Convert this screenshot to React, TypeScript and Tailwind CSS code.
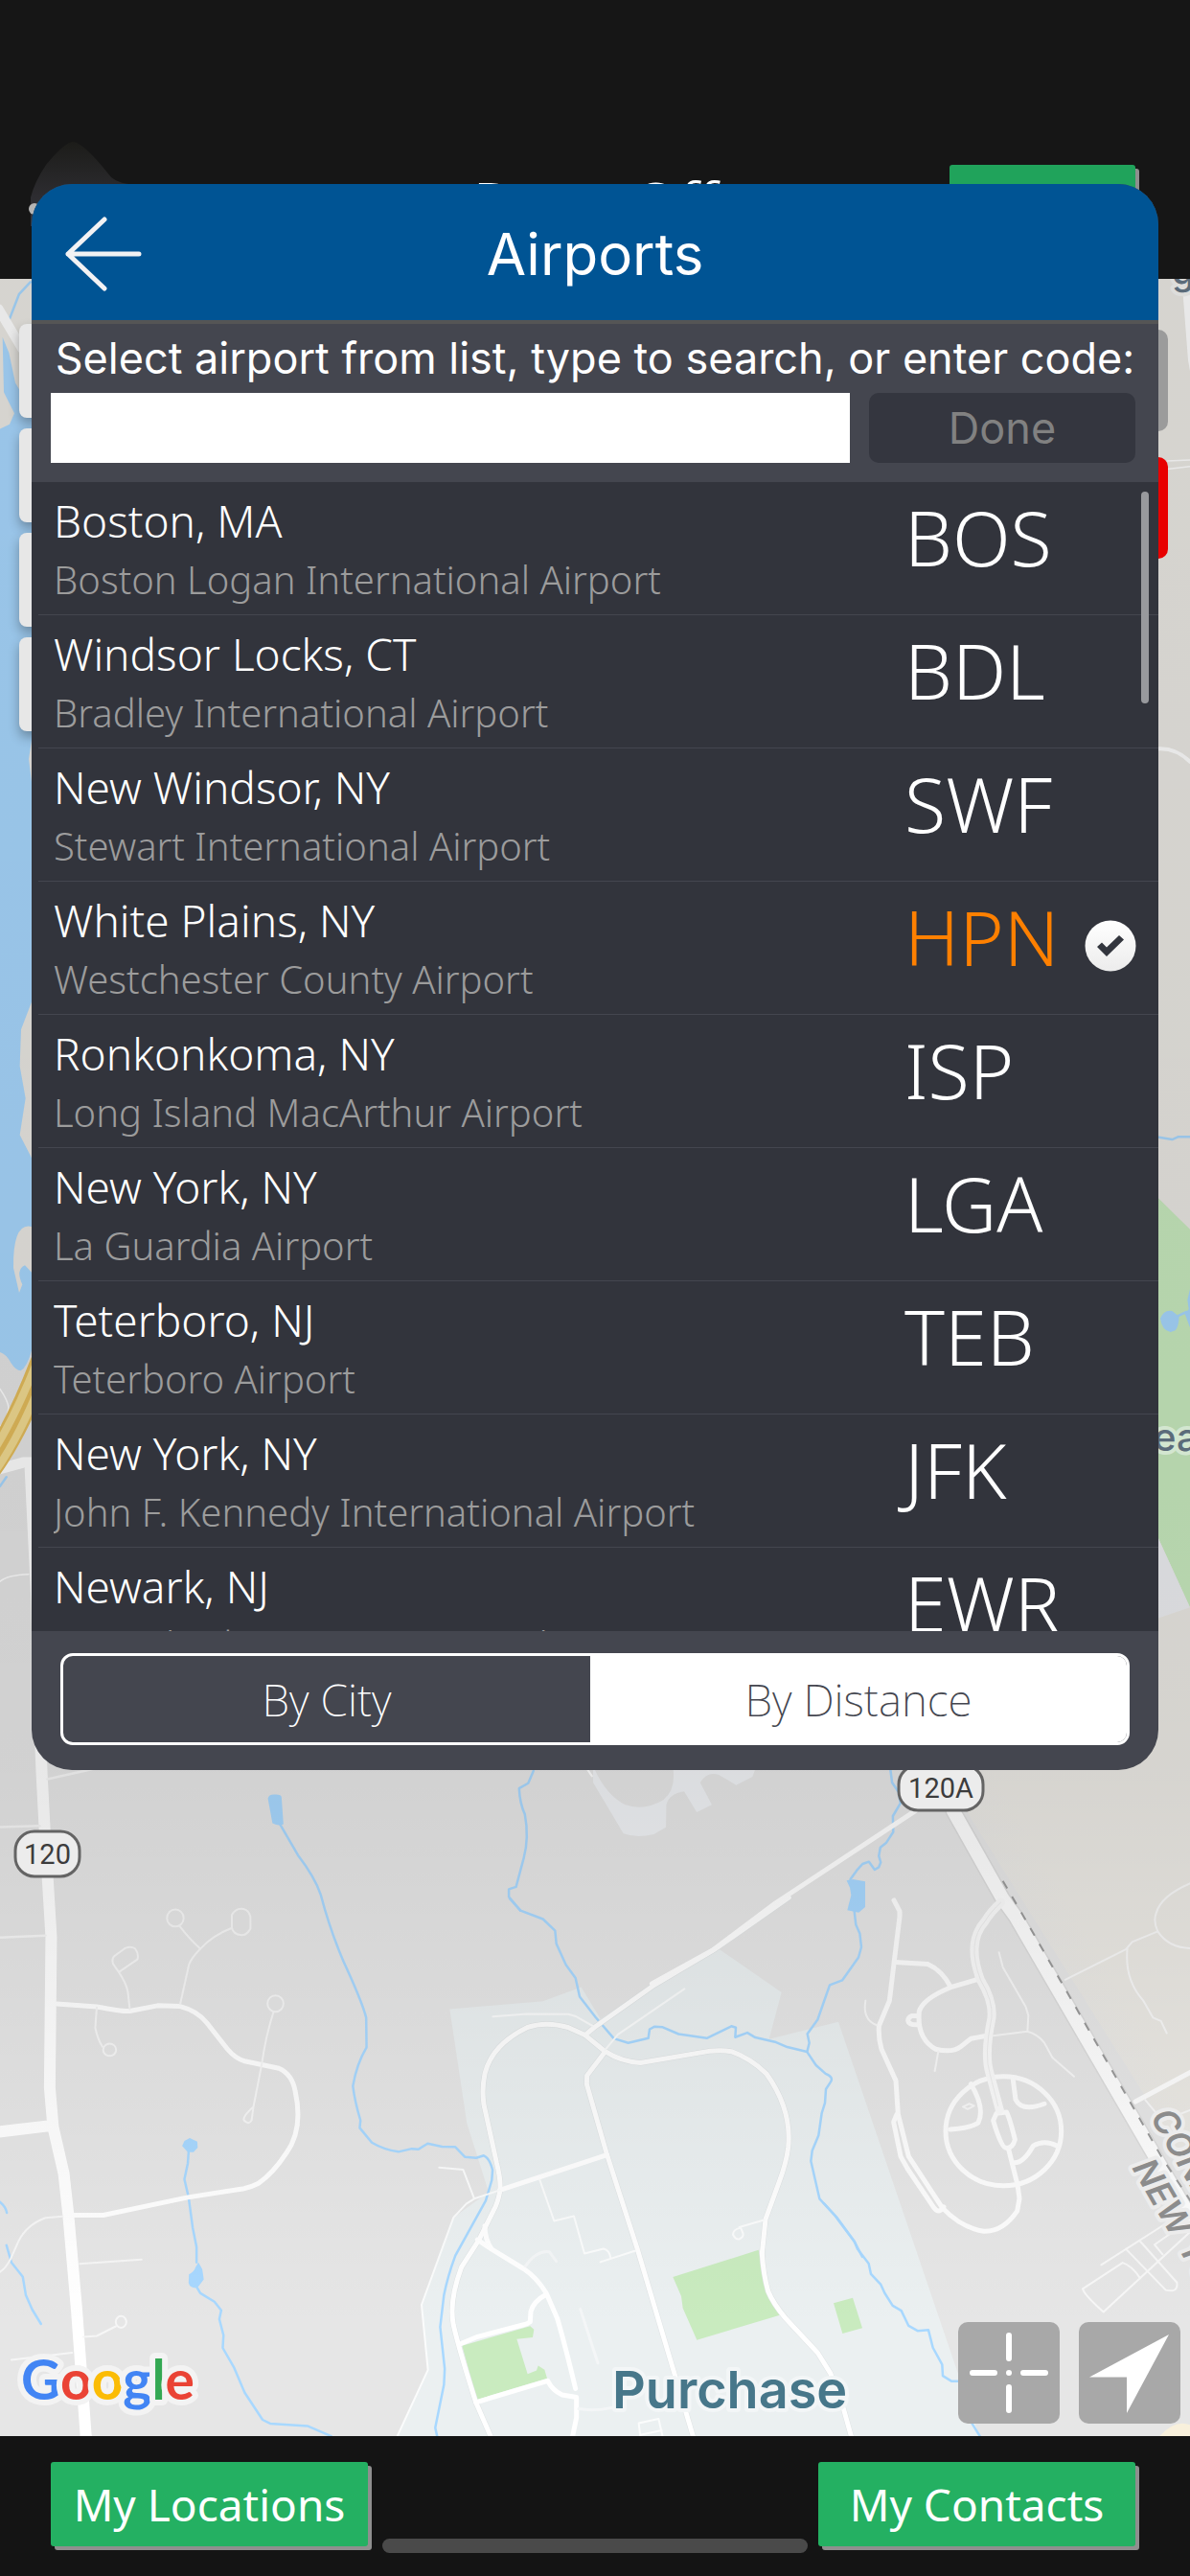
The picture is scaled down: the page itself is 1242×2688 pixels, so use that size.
import React from "react";

type Airport = { city: string; name: string; code: string; selected?: boolean };

const airports: Airport[] = [
  { city: "Boston, MA", name: "Boston Logan International Airport", code: "BOS" },
  { city: "Windsor Locks, CT", name: "Bradley International Airport", code: "BDL" },
  { city: "New Windsor, NY", name: "Stewart International Airport", code: "SWF" },
  { city: "White Plains, NY", name: "Westchester County Airport", code: "HPN", selected: true },
  { city: "Ronkonkoma, NY", name: "Long Island MacArthur Airport", code: "ISP" },
  { city: "New York, NY", name: "La Guardia Airport", code: "LGA" },
  { city: "Teterboro, NJ", name: "Teterboro Airport", code: "TEB" },
  { city: "New York, NY", name: "John F. Kennedy International Airport", code: "JFK" },
  { city: "Newark, NJ", name: "Newark Liberty International Airport", code: "EWR" },
];

const WATER = "#a8d8ff";
const GRASS = "#c9ebbf";
const ROAD = "#ffffff";

/* A map section with its own drawing grid, placed on the full map. */
function Section({ x, y, sx, sy, children }: { x: number; y: number; sx: number; sy: number; children: React.ReactNode }) {
  return <g transform={`translate(${x} ${y}) scale(${1 / sx} ${1 / sy})`}>{children}</g>;
}

function Shield({ x, y, w, label }: { x: number; y: number; w: number; label: string }) {
  return (
    <g>
      <rect x={x} y={y} width={w} height={47} rx={20} fill="#ececec" stroke="#646464" strokeWidth={3} />
      <text x={x + w / 2} y={y + 34} textAnchor="middle" fontSize={29} fill="#3c3c3c" fontFamily="Roboto, sans-serif">
        {label}
      </text>
    </g>
  );
}

function MapDrawing() {
  return (
    <svg
      aria-hidden="true"
      viewBox="0 291 1242 2251"
      preserveAspectRatio="xMidYMid slice"
      className="absolute inset-0 h-full w-full [&_ellipse]:[vector-effect:non-scaling-stroke] [&_path]:[vector-effect:non-scaling-stroke]"
      fill="none"
      strokeLinecap="round"
      strokeLinejoin="round"
    >
      <defs>
        <linearGradient id="shade" gradientUnits="userSpaceOnUse" x1="0" y1="291" x2="0" y2="2542">
          <stop offset="0" stopOpacity="0.09" />
          <stop offset="0.55" stopOpacity="0.1" />
          <stop offset="0.69" stopOpacity="0.09" />
          <stop offset="0.84" stopOpacity="0.04" />
          <stop offset="0.95" stopOpacity="0" />
        </linearGradient>
        <linearGradient id="tan" gradientUnits="userSpaceOnUse" x1="1010" y1="2080" x2="1130" y2="2010">
          <stop offset="0" stopColor="#e6e6e6" />
          <stop offset="1" stopColor="#ebe9e4" />
        </linearGradient>
      </defs>
      <rect x="0" y="291" width="1242" height="2251" fill="#e6e6e6" />
      <rect x="0" y="291" width="60" height="1120" fill="#ebe9e4" />
      <path d="M900 291H1242V2262L990 1860Z" fill="url(#tan)" />

      {/* western lake and shore */}
      <Section x={0} y={280} sx={3} sy={1.045}>
        <path fill={WATER} d="M8 75L12 135L45 158L30 170L0 175V1182Q20 1184 35 1194Q50 1202 65 1202Q85 1198 99 1180V970L62 945L80 905L62 870L66 830L99 800V560L90 535L99 515V155L48 125L28 92Z" />
        <path fill="#ebe9e4" d="M99 1045Q40 1040 42 1090L60 1117L70 1108Q48 1092 78 1087L99 1095Z" />
        <path stroke={WATER} strokeWidth={2.5} d="M30 55L60 28L95 15M0 1328L20 1318" />
        <path stroke={ROAD} strokeWidth={10} d="M-5 44L70 88" />
        <path stroke={ROAD} strokeWidth={1.5} d="M0 1222Q26 1235 27 1243Q20 1258 0 1263M0 1432Q20 1425 90 1424" />
        <path stroke={ROAD} strokeWidth={11} d="M0 1309L75 1302H99" />
      </Section>

      {/* parkway */}
      <path stroke="#e5bd5c" strokeWidth={26} d="M-12 1533Q16 1495 44 1423" />
      <path stroke="#f3dc92" strokeWidth={8} d="M-17 1529Q11 1491 39 1420M-7 1538Q21 1500 49 1427" />

      {/* eastern park */}
      <Section x={1190} y={280} sx={3} sy={1.045}>
        <path fill={GRASS} d="M40 1010L57 1014L156 1048V1460L57 1385H40Z" />
        <path fill="#eeeff2" d="M40 1375L57 1385L156 1460L57 1472H40Z" />
        <path fill={WATER} d="M63 1145Q75 1135 100 1137L122 1143Q120 1155 110 1158L95 1160Q68 1158 63 1145ZM156 1113L148 1125L152 1135L140 1140L156 1155Z" />
        <path stroke={WATER} strokeWidth={2.5} d="M120 1142L145 1138M50 947L100 950L120 947H156" />
        <path stroke={ROAD} strokeWidth={4} d="M50 524Q110 522 156 538" />
        <path stroke={ROAD} strokeWidth={1.5} d="M85 210L156 209M85 219L156 216" />
        <path fill={ROAD} d="M130 10L150 100L156 112V10Z" />
      </Section>

      {/* campus grounds */}
      <Section x={400} y={1980} sx={3} sy={2.8}>
        <path fill="#ebf0f1" d="M208 326L500 303L620 262L680 355L850 252L1050 150L1247 277L1208 414L1425 363L1867 1576H45L140 1380L120 1190L220 935L330 860L262 660Z" />
        <path fill={GRASS} d="M907 1109L1175 1030Q1190 1120 1242 1220L982 1293L938 1200L933 1165ZM1410 1185L1470 1170L1500 1258L1438 1274ZM247 1310L460 1252L472 1262L468 1285L418 1290L452 1392L480 1382L485 1368L505 1380L513 1405L293 1467Z" />
      </Section>

      {/* western streets and streams */}
      <Section x={0} y={1850} sx={2.525} sy={2.8}>
        <path fill={WATER} d="M706 75Q708 62 724 63Q742 62 742 72L747 150Q735 157 718 147ZM523 1430L533 1450L537 1480L520 1505Q500 1505 497 1490L498 1465Q512 1458 515 1445Z" />
        <path fill={WATER} d="M480 1090L486 1075L500 1067L520 1077L521 1095L510 1108H495Z" />
        <g stroke={WATER} strokeWidth={2.5}>
          <path d="M738 150L785 240Q830 305 845 355Q870 460 905 550Q955 670 965 715L966 802Q940 850 930 915Q935 960 950 1015L948 1037Q965 1060 980 1080Q1010 1100 1050 1107L1085 1098L1102 1100L1127 1083L1165 1092L1200 1093L1225 1122L1255 1125L1275 1118Q1290 1125 1298 1160L1296 1190L1280 1250Q1240 1330 1200 1410Q1180 1470 1170 1525L1160 1619L1172 1741L1170 1787L1147 1913L1152 1938" />
          <path d="M497 1108L495 1140L486 1187L497 1240L508 1330L518 1385V1430M520 1505L528 1520L565 1545L583 1570L578 1596L589 1643L587 1680L617 1738L645 1811L692 1890L712 1901L810 1908L873 1938" />
          <path d="M-5 1250Q15 1265 18 1285M17 1380L30 1430L60 1472L68 1525L85 1568L108 1610" />
          <path d="M1406 -6L1392 30L1368 45Q1370 90 1383 120Q1395 190 1380 250L1360 333L1341 340V362L1371 402" />
        </g>
        <path stroke={ROAD} strokeWidth={12} d="M80 -888L97 -500L103 -200L110 0L118 170L135 480L131 920L140 1035L168 1170L180 1290L202 1568L227 1945M-5 1049L138 1030" />
        <g stroke={ROAD} strokeWidth={5}>
          <path d="M150 675L255 683Q320 697 342 696L415 680L475 682Q520 695 545 730L598 805Q620 835 645 842L735 863Q770 880 778 930Q800 1040 755 1110Q720 1170 680 1200Q660 1212 635 1216L495 1240L272 1292H195" />
        </g>
        <g stroke="#f6f6f6" strokeWidth={2}>
          <path d="M0 158L105 155M0 481L120 475M125 18L300 -25" strokeWidth={2.5} />
          <path d="M342 690L337 640Q333 615 313 582L298 558Q293 540 305 532L330 512Q345 505 356 513Q367 530 362 545L313 582M475 675L498 560Q505 540 528 514Q560 475 611 453M528 514Q495 480 473 447" />
          <path d="M611 445V415Q620 397 636 397Q655 397 660 420V455Q650 475 636 474Q615 472 611 453ZM255 685L251 745Q258 780 270 800" />
          <ellipse cx="462" cy="424" rx="22" ry="25" />
          <ellipse cx="289" cy="809" rx="17" ry="18" />
          <ellipse cx="726" cy="674" rx="21" ry="24" />
          <ellipse cx="319" cy="1604" rx="14" ry="17" />
          <path d="M721 698Q700 770 690 850L668 975L663 1015Q655 1030 643 1015Q638 1005 668 975" />
          <path d="M165 1296L120 1300Q70 1320 48 1370L28 1420Q15 1448 0 1458M210 1434L373 1422M220 1648L255 1645L305 1617M30 1715L190 1694" />
        </g>
      </Section>

      {/* campus streets */}
      <Section x={400} y={1980} sx={3} sy={2.8}>
        <g stroke={WATER} strokeWidth={2.5}>
          <path d="M396 3L430 38L500 63L538 97L542 135L572 197L602 235L615 290L665 350L722 412L767 425L830 411L834 385L850 377L875 379L925 399L1013 411L1090 376L1104 380L1102 408L1140 395L1165 409L1230 423L1265 437L1327 451L1355 490L1385 515Q1412 525 1400 540L1386 560L1383 600L1373 630L1363 695L1343 740L1339 770L1366 880L1415 930L1475 1005L1500 1050" />
          <path d="M1475 40L1480 80L1492 105L1497 145L1488 175L1437 242L1398 256L1360 357L1328 398L1334 425L1327 451" />
        </g>
        <g stroke="#dfe3e4" strokeWidth={6}>
          <path d="M1270 0L1040 150L850 255L660 380L632 402" />
          <path d="M632 402L580 380Q510 360 450 380Q340 430 318 515Q308 560 315 605L355 775Q370 830 365 860Q358 895 345 915L300 1000L245 1080Q205 1180 220 1250Q240 1330 290 1475L338 1578M632 402L695 450Q745 480 805 483L1020 449Q1060 445 1090 450Q1150 470 1200 515Q1280 620 1268 730Q1262 775 1240 830L1197 940L1186 1040Q1190 1100 1205 1150Q1220 1185 1260 1230L1360 1330L1400 1390L1440 1490L1467 1580" />
          <path d="M695 450L638 520L637 545L700 750L795 1025L905 1370L972 1580" />
        </g>
        <g stroke={ROAD} strokeWidth={5}>
          <path d="M1270 0L1040 150L850 255L660 380L632 402L580 380Q510 360 450 380Q340 430 318 515Q308 560 315 605L355 775Q370 830 365 860Q358 895 345 915L300 1000L245 1080Q205 1180 220 1250Q240 1330 290 1475L338 1578" />
          <path d="M632 402L695 450Q745 480 805 483L1020 449Q1060 445 1090 450Q1150 470 1200 515Q1280 620 1268 730Q1262 775 1240 830L1197 940L1186 1040Q1190 1100 1205 1150Q1220 1185 1260 1230L1360 1330L1400 1390L1440 1490L1467 1580" />
          <path d="M695 450L638 520L637 545L700 750L795 1025L905 1370L972 1580M365 855L700 752" />
          <path d="M295 1000L340 1028L440 1085Q480 1110 510 1155L545 1230Q570 1310 602 1435M318 960Q318 1000 340 1028M510 1160Q470 1180 462 1210L460 1240Q450 1247 440 1248L290 1285L240 1305M290 1475L515 1412Q530 1440 560 1453L605 1460V1520L592 1578" />
        </g>
        <g stroke="#fbfcfc" strokeWidth={2}>
          <path d="M343 348L450 340L580 341L605 348L655 375M695 445L735 400L943 267M175 789L250 795L285 880L365 855M285 880L260 895L220 935L120 1190L140 1380L42 1578" />
          <path d="M490 825L535 945L597 931L630 1040L690 1026Q708 1030 712 1053M680 1065L790 1032M1192 942L1115 963M1119 965Q1095 970 1095 985Q1103 1000 1115 998Q1130 992 1126 980Z" />
          <path d="M805 1576L800 1536L862 1523L875 1576M805 1570L872 1557" />
        </g>
        <path stroke="#f4f6f7" strokeWidth={3} d="M445 1077Q480 1030 520 1035L542 1063M617 1203L672 1360M612 1494Q660 1502 720 1490" />
      </Section>

      {/* northern grounds between the two state routes */}
      <Section x={621} y={1600} sx={2.525} sy={3}>
        <path fill="#f0f2f5" d="M-5 730V780L75 940Q110 955 155 942L187 920L188 850Q195 815 235 808L268 873L308 850L277 780Q295 745 325 755L372 788L415 762L425 730H205Q215 800 180 835Q130 870 80 850Q30 820 0 741Z" />
        <path stroke={WATER} strokeWidth={2.5} d="M778 735L783 780L800 810L805 845L785 885L786 935L768 968L752 983L748 1010L753 1030L748 1045L737 1053L722 1028L705 1035L690 1055L673 1083" />
        <path fill={WATER} d="M663 1087L680 1083L712 1090V1170L695 1187L665 1180L668 1165L675 1133L672 1110Z" />
        <path stroke={ROAD} strokeWidth={5} d="M845 868L475 1158L310 1305L150 1410" />
        <path stroke={ROAD} strokeWidth={2} d="M-25 730L-8 760" />
      </Section>

      {/* eastern streets */}
      <Section x={860} y={2000} sx={3} sy={2.279}>
        <path stroke={WATER} strokeWidth={2.5} d="M0 682L40 715L95 772L105 790L140 825L147 850L178 875L190 895L215 925L242 937L265 973L293 985L327 983L341 1025L370 1065L372 1092L400 1105H430M455 1195L492 1240" />
        <path stroke="#dcdcdc" strokeWidth={17} d="M405 -251L560 -42L600 0L1040 575L1170 745" />
        <path stroke="#fdfdfd" strokeWidth={14} d="M405 -251L560 -42L600 0L1040 575L1170 745" />
        <path stroke="#9a9a9a" strokeWidth={2} strokeLinecap="butt" strokeDasharray="9 10" d="M560 -85L630 6L1060 575L1160 690" />
        <g stroke="#fdfdfd" strokeWidth={5}>
          <path d="M219 -39L237 -13V0L220 105L205 200L172 260Q170 290 180 315L225 390L232 470L265 570L370 692Q430 740 500 748Q560 750 605 700L612 670L606 638L577 550" />
          <path d="M222 108L325 113Q370 128 397 168L490 147M397 168Q310 195 298 225Q290 290 350 315Q400 325 430 308L460 290L510 283M295 236H275Q263 240 263 247Q265 258 295 257" />
          <ellipse cx="562" cy="510" rx="181" ry="130" />
          <path d="M540 468L572 465Q582 480 598 530Q590 552 570 550Q555 550 530 485ZM460 398Q505 455 483 490Q460 503 395 506M592 388L600 435Q620 465 690 445M597 585Q625 585 655 545Q690 530 730 545M975 440L1150 369" />
          <path d="M228 470L218 488L240 570L262 600L345 693Q360 708 375 690" />
        </g>
        <path stroke="#fafafa" strokeWidth={9} d="M554 -34Q520 -10 505 10Q445 60 490 150Q530 200 525 240Q500 330 520 375L550 460" />
        <path stroke="#ededed" strokeWidth={1} d="M554 -34Q520 -10 505 10Q445 60 490 150Q530 200 525 240Q500 330 520 375L545 450" />
        <g stroke="#f7f7f7" strokeWidth={2}>
          <path d="M130 200Q120 245 165 258M548 85L560 120L632 215L640 235L637 273L530 283M637 273Q670 280 690 300L715 335L783 380M358 320L347 367M435 452L455 445L470 450L450 458Z" />
          <path d="M755 150L945 78L965 60L1045 35Q1030 10 1040 -8Q1055 -50 1150 -80M1045 35Q1080 75 1150 75M950 75Q940 150 1000 200L1030 240L1055 248L1073 277M1005 435L1060 485L1146 460" />
          <path d="M868 828L1060 735M810 885L935 823Q965 830 990 860M810 885Q815 900 875 940L1146 750M945 790L1070 888Q1110 895 1105 870L990 772M1060 803L1035 780L1120 735" />
        </g>
        <path fill="#f8f0dc" d="M1045 1240Q1100 1192 1150 1210V1240Z" />
      </Section>

      <rect x="0" y="291" width="1242" height="2251" fill="url(#shade)" />

      <Shield x={16} y={1911} w={67} label="120" />
      <Shield x={938} y={1842} w={88} label="120A" />

      <g fontFamily="Inter, sans-serif" strokeWidth={8} className="[paint-order:stroke]">
        <g fill="#8c8c8c" stroke="#ececec" fontSize={36} fontWeight={600} fontStyle="italic">
          <text transform="translate(1200 2209) rotate(60)">CONNECTICUT</text>
          <text transform="translate(1181 2262) rotate(60)">NEW YORK</text>
        </g>
        <text x={639} y={2513} fontSize={54} fontWeight={600} fill="#47778a" stroke="#f3f6f7">
          Purchase
        </text>
        <text x={1204} y={1514} fontSize={40} fontWeight={500} fill="#5b6b7a" stroke="#d3e6d0">
          ea
        </text>
        <text x={1223} y={297} fontSize={38} fontWeight={500} fill="#5b6b7a" stroke="#dddddb">
          g
        </text>
      </g>
      <text
        x={22}
        y={2504}
        fontSize={57}
        fontWeight={700}
        fontFamily="Lato, sans-serif"
        stroke="#f3f3f3"
        strokeWidth={12}
        className="[paint-order:stroke]"
      >
        <tspan fill="#4285f4">G</tspan>
        <tspan fill="#ea4335">o</tspan>
        <tspan fill="#fbbc05">o</tspan>
        <tspan fill="#4285f4">g</tspan>
        <tspan fill="#34a853">l</tspan>
        <tspan fill="#ea4335">e</tspan>
      </text>
    </svg>
  );
}

function SelectedMark() {
  return (
    <svg viewBox="0 0 54 54" className="mt-10 h-[54px] w-[54px] shrink-0" role="img" aria-label="Selected">
      <defs>
        <linearGradient id="disc" x1="0" y1="0" x2="0" y2="1">
          <stop offset="0" stopColor="#ffffff" />
          <stop offset="1" stopColor="#ececec" />
        </linearGradient>
      </defs>
      <circle cx="27" cy="27" r="26.5" fill="url(#disc)" />
      <path d="M13 28L18 23.500L23 28.500L36 16L41 20.500L23 38Z" fill="#33363e" />
    </svg>
  );
}

const greenButton =
  "rounded-[3px] bg-[#24b062] font-['Noto_Sans',sans-serif] text-[46px] text-white shadow-[4px_4px_0_#8f8f8f]";

export default function App() {
  return (
    <div className="relative flex min-h-screen flex-col overflow-hidden bg-[#141414]">
      <header className="relative flex h-[291px] shrink-0 items-start justify-center bg-[#161616]">
        <svg viewBox="0 0 110 90" className="absolute left-[26px] top-[146px] h-[90px] w-[110px]" aria-hidden="true">
          <defs>
            <linearGradient id="peak" x1="0" y1="0" x2="0" y2="1">
              <stop offset="0" stopColor="#1c1c19" />
              <stop offset="1" stopColor="#36353d" />
            </linearGradient>
          </defs>
          <path d="M6 60Q10 44 22 26Q42 2 50 2Q60 2 86 34Q92 44 108 46V90H6Z" fill="url(#peak)" />
          <circle cx="10" cy="72" r="6" fill="#b5b5b5" />
        </svg>
        <h1 className="mt-[170px] font-['Noto_Sans',sans-serif] text-[64px] font-light leading-[86px] text-white">Drop-Off</h1>
        <button type="button" aria-label="Next" className="absolute right-[57px] top-[172px] h-[88px] w-[194px] rounded-[3px] bg-[#20a35b] shadow-[4px_4px_0_#8f8f8f]" />
      </header>

      <main className="relative flex-1">
        <MapDrawing />
        <div className="absolute left-5 top-[47px] flex flex-col gap-[11px]">
          {["Map", "Satellite", "Traffic", "Layers"].map((label) => (
            <button key={label} type="button" aria-label={label} className="h-[98px] w-[98px] rounded-lg bg-[#e7e7e7] shadow-[0_6px_12px_rgba(0,0,0,0.3)]" />
          ))}
        </div>
        <div className="absolute right-[23px] top-[53px] flex flex-col gap-[27px]">
          <button type="button" aria-label="Search" className="h-[106px] w-[106px] rounded-[10px] bg-[#9b9b9b]" />
          <button type="button" aria-label="Clear" className="h-[106px] w-[106px] rounded-[10px] bg-[#e80000]" />
        </div>
        <div className="absolute bottom-[13px] right-2.5 flex gap-5">
          <button type="button" aria-label="Center map" className="h-[106px] w-[106px] rounded-[10px] bg-[#a8a8a8]">
            <svg viewBox="0 0 106 106" stroke="#fff" strokeWidth="6" strokeLinecap="round" aria-hidden="true">
              <path d="M53 14V38M53 68V92M15 53H38M68 53H91M53 53H53.010" />
            </svg>
          </button>
          <button type="button" aria-label="My position" className="h-[106px] w-[106px] rounded-[10px] bg-[#a8a8a8]">
            <svg viewBox="0 0 106 106" fill="#fff" aria-hidden="true">
              <path d="M94 13L50 95V57.500L11 57.500Z" />
            </svg>
          </button>
        </div>
      </main>

      <footer className="relative flex h-[146px] shrink-0 items-start justify-between pl-[53px] pr-[57px] pt-[27px]">
        <button type="button" className={`${greenButton} h-[88px] w-[331px]`}>
          My Locations
        </button>
        <button type="button" className={`${greenButton} h-[88px] w-[331px]`}>
          My Contacts
        </button>
        <div className="absolute bottom-6 left-1/2 h-[15px] w-[444px] -translate-x-1/2 rounded-full bg-[#4a4a4a]" />
      </footer>

      <section
        role="dialog"
        aria-label="Airports"
        className="absolute inset-x-[33px] top-[192px] overflow-hidden rounded-[42px] bg-[#44464f]"
      >
        <div className="relative flex h-[146px] items-center justify-center border-b-4 border-[#555555] bg-[#005494]">
          <button type="button" aria-label="Back" className="absolute left-[33px] top-8">
            <svg viewBox="0 0 84 82" className="h-[82px] w-[84px]" fill="none" stroke="#f2f2f4" strokeWidth="5" strokeLinecap="round" strokeLinejoin="round" aria-hidden="true">
              <path d="M43 5L5 41L43 77M5 41H79" />
            </svg>
          </button>
          <h2 className="pt-1 font-['Inter',sans-serif] text-[60px] leading-[76px] text-white">Airports</h2>
        </div>

        <form className="px-5 pb-5 font-['Inter',sans-serif]" onSubmit={(e) => e.preventDefault()}>
          <label htmlFor="code" className="block whitespace-nowrap text-center text-[45px] leading-[72px] text-white">
            Select airport from list, type to search, or enter code:
          </label>
          <div className="flex gap-5 pr-1">
            <input id="code" type="text" className="h-[73px] min-w-0 flex-1 bg-white px-4 text-[44px] text-black outline-none" />
            <button type="submit" disabled className="h-[73px] w-[278px] rounded-[10px] bg-[#34363f] text-[45px] text-[#818181]">
              Done
            </button>
          </div>
        </form>

        <div className="relative h-[1199px] overflow-hidden bg-[#32343c] font-['Noto_Sans',sans-serif]">
          <ul>
            {airports.map((a) => (
              <li key={a.code} className="ml-[7px] border-b border-[#44464f]">
                <button type="button" className="flex h-[138px] w-full items-start pl-4 text-left">
                  <span className="flex min-w-0 flex-1 flex-col pt-2.5">
                    <span className="truncate text-[46px] font-light leading-[60px] text-white">{a.city}</span>
                    <span className="truncate text-[40px] font-light leading-[64px] text-[#9c9c9c]">{a.name}</span>
                  </span>
                  <span className="flex w-[265px] shrink-0 items-start">
                    <span className={`w-[188px] pt-2 text-[79px] font-light leading-[100px] ${a.selected ? "text-[#ff8000]" : "text-white"}`}>{a.code}</span>
                    {a.selected && <SelectedMark />}
                  </span>
                </button>
              </li>
            ))}
          </ul>
          <div className="absolute right-2.5 top-2.5 h-[221px] w-2 rounded-full bg-[#98999d]" />
        </div>

        <div className="px-[30px] pb-[26px] pt-[23px] font-['Noto_Sans',sans-serif] text-[46px] font-extralight">
          <div className="flex h-24 overflow-hidden rounded-[13px] border-[3px] border-white">
            <button type="button" aria-pressed="false" className="flex-1 text-white">
              By City
            </button>
            <button type="button" aria-pressed="true" className="w-[560px] bg-white text-[#44464f]">
              By Distance
            </button>
          </div>
        </div>
      </section>
    </div>
  );
}
